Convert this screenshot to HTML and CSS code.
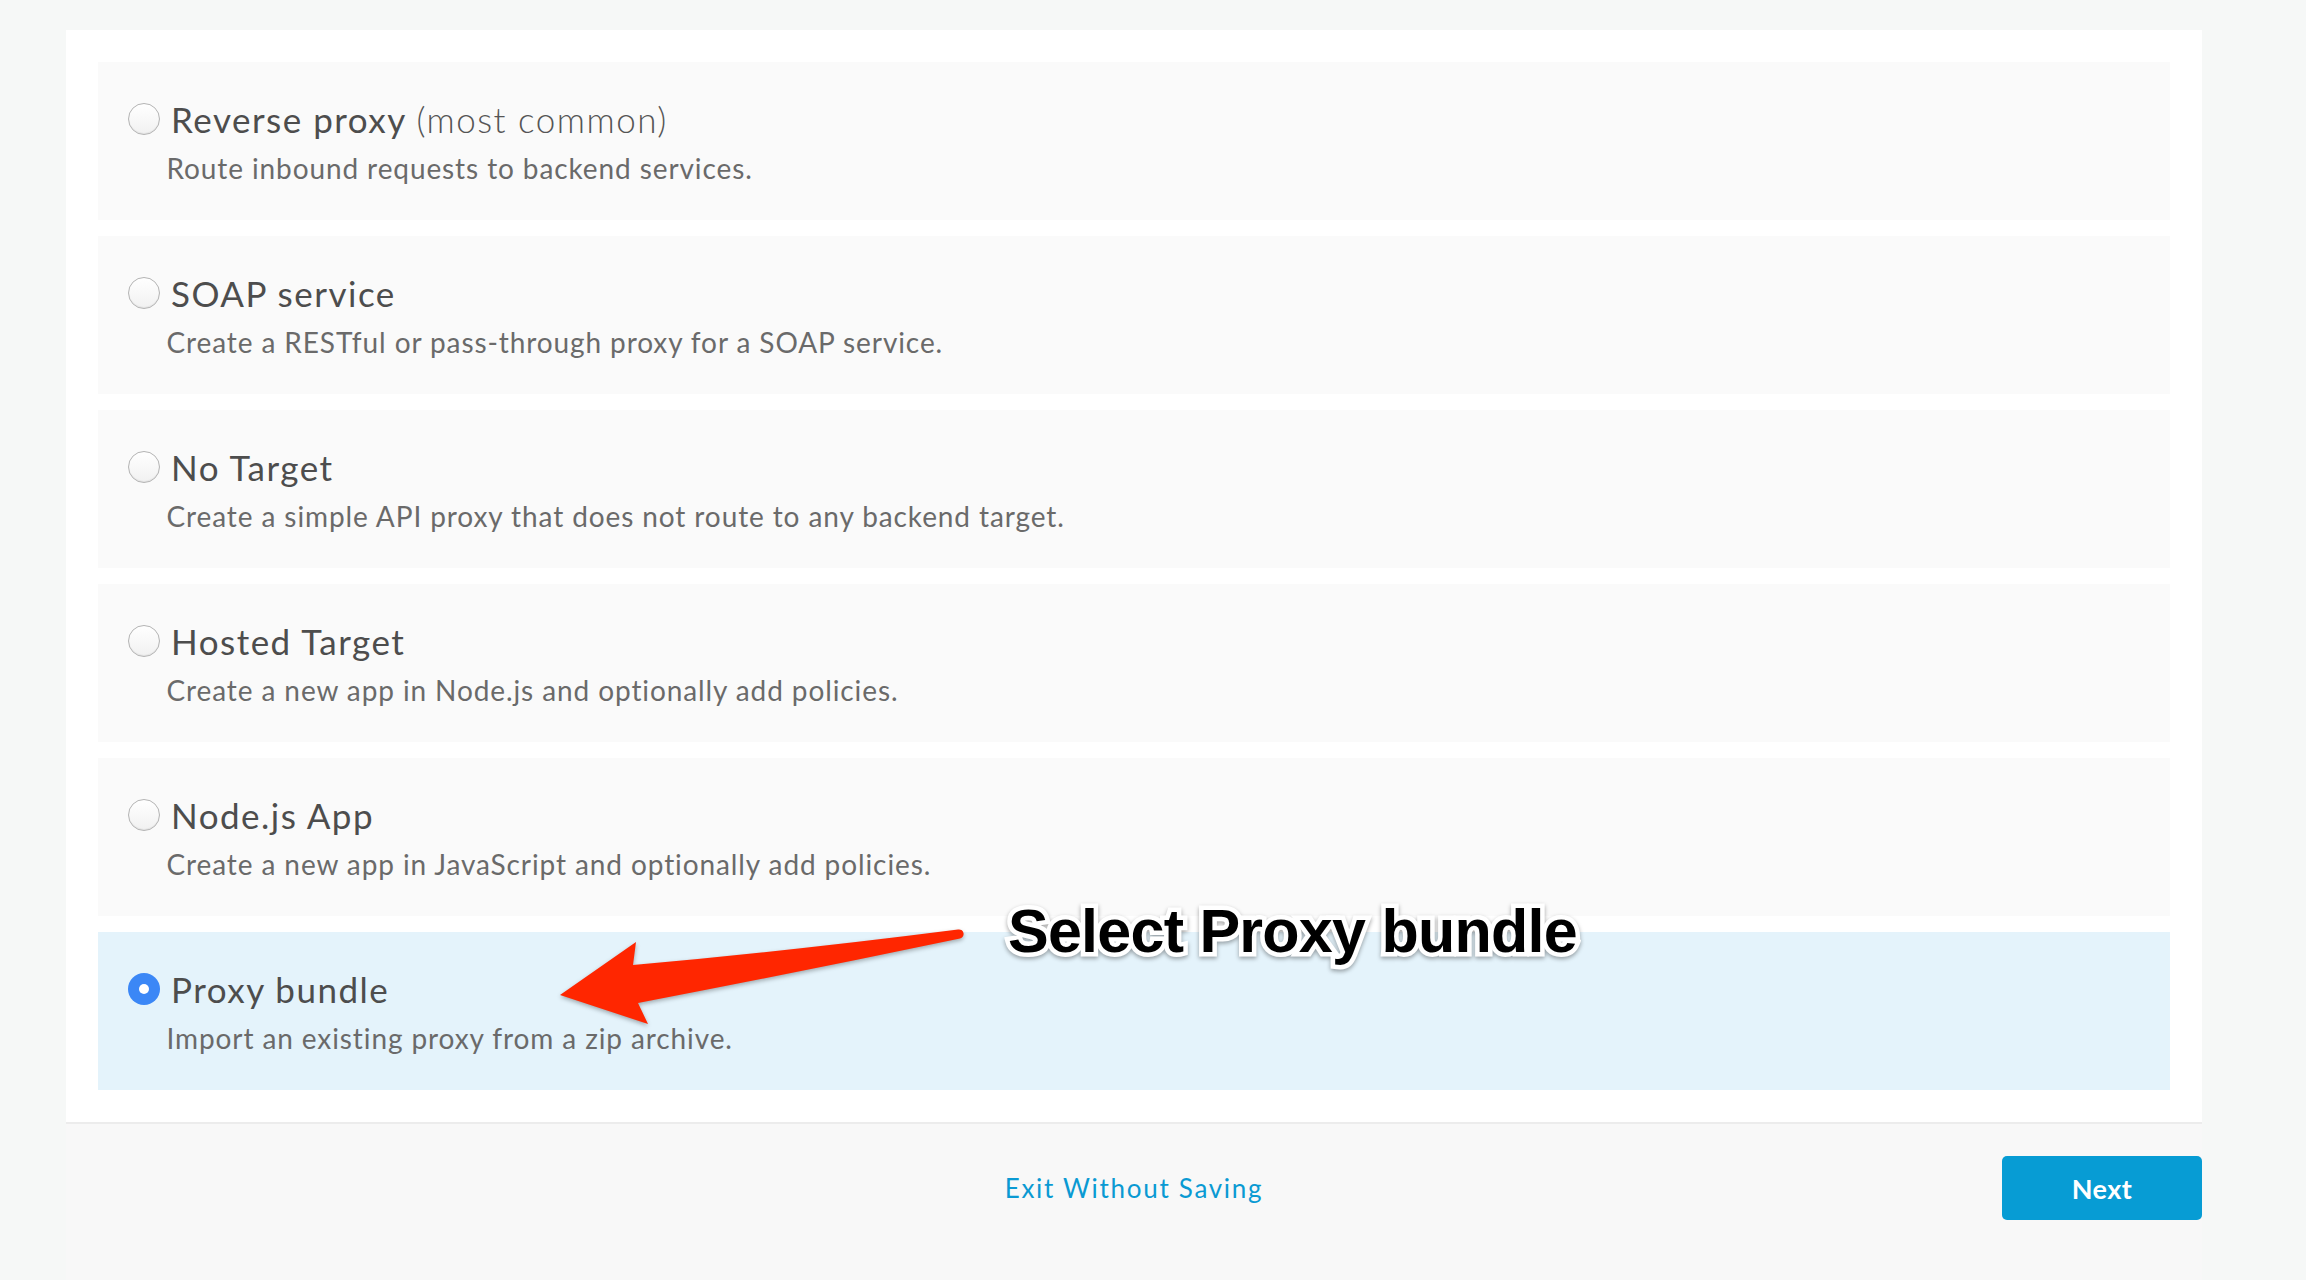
FILE: index.html
```html
<!DOCTYPE html>
<html lang="en">
<head>
<meta charset="utf-8">
<title>Build a Proxy</title>
<link rel="stylesheet" href="styles.css">
</head>
<body>
<main class="page">
  <section class="panel">
    <label class="option">
      <span class="option-head"><span class="radio"></span><span class="option-title">Reverse proxy <span class="option-note">(most common)</span></span></span>
      <span class="option-desc">Route inbound requests to backend services.</span>
    </label>
    <label class="option">
      <span class="option-head"><span class="radio"></span><span class="option-title">SOAP service</span></span>
      <span class="option-desc">Create a RESTful or pass-through proxy for a SOAP service.</span>
    </label>
    <label class="option">
      <span class="option-head"><span class="radio"></span><span class="option-title">No Target</span></span>
      <span class="option-desc">Create a simple API proxy that does not route to any backend target.</span>
    </label>
    <label class="option">
      <span class="option-head"><span class="radio"></span><span class="option-title">Hosted Target</span></span>
      <span class="option-desc">Create a new app in Node.js and optionally add policies.</span>
    </label>
    <label class="option">
      <span class="option-head"><span class="radio"></span><span class="option-title">Node.js App</span></span>
      <span class="option-desc">Create a new app in JavaScript and optionally add policies.</span>
    </label>
    <label class="option option-selected">
      <span class="option-head"><span class="radio radio-on"></span><span class="option-title">Proxy bundle</span></span>
      <span class="option-desc">Import an existing proxy from a zip archive.</span>
    </label>
  </section>
  <footer class="footer">
    <span class="footer-spacer"></span>
    <a class="exit-link" href="#">Exit Without Saving</a>
    <button class="next-btn" type="button">Next</button>
  </footer>
</main>

<div class="annotation">
  <svg class="arrow" width="2306" height="1280" viewBox="0 0 2306 1280">
    <path class="arrow-shape" d="M 958 929.5 Q 790 951 633 965 L 636 942 L 560 995 L 648 1024 L 638 1003 Q 800 972 960 938.5 A 4.5 4.5 0 0 0 958 929.5 Z"/>
  </svg>
  <div class="callout">Select Proxy bundle</div>
</div>
</body>
</html>
```

FILE: styles.css
```css
html, body {
  margin: 0;
  padding: 0;
}

body {
  background: #f6f8f7;
  font-family: Lato, "Open Sans", "Liberation Sans", sans-serif;
  width: 2306px;
  height: 1280px;
  overflow: hidden;
  position: relative;
}

.page {
  padding-top: 30px;
  margin-left: 66px;
  width: 2136px;
}

.panel {
  background: #ffffff;
  padding: 32px;
  display: flex;
  flex-direction: column;
  gap: 16px;
}

.option {
  display: flex;
  flex-direction: column;
  background: #fafafa;
  padding: 32px 30px 28px;
  cursor: pointer;
}

.option-selected {
  background: #e4f3fb;
}

.option-head {
  display: flex;
  align-items: center;
  gap: 11px;
  height: 50px;
}

.radio {
  width: 32px;
  height: 32px;
  box-sizing: border-box;
  border-radius: 50%;
  border: 1.5px solid #b4b4b4;
  background: linear-gradient(#ffffff, #f1f1f1);
  box-shadow: inset 0 -1px 1px rgba(0, 0, 0, 0.06);
  flex: none;
  display: flex;
  align-items: center;
  justify-content: center;
}

.radio-on {
  border: none;
  background: #3b87f6;
  box-shadow: none;
}

.radio-on::after {
  content: "";
  width: 10px;
  height: 10px;
  border-radius: 50%;
  background: #ffffff;
}

.option-title {
  font-size: 35px;
  line-height: 50px;
  color: #4d4d4d;
  letter-spacing: 1.5px;
}

.option-note {
  font-weight: 300;
  color: #555555;
}

.option-desc {
  margin-left: 38.5px;
  font-size: 28px;
  line-height: 48px;
  color: #6a6a6a;
  letter-spacing: 0.9px;
}

.footer {
  border-top: 2px solid #ececec;
  background: #f8f8f8;
  padding: 32px 0 60px;
  display: grid;
  grid-template-columns: 1fr auto 1fr;
  align-items: center;
}

.exit-link {
  font-size: 26px;
  color: #0a9ad3;
  text-decoration: none;
  letter-spacing: 1.7px;
}

.next-btn {
  justify-self: end;
  width: 200px;
  height: 64px;
  border: none;
  border-radius: 5px;
  background: #079cd4;
  color: #ffffff;
  font-family: Lato, "Open Sans", "Liberation Sans", sans-serif;
  font-weight: 700;
  font-size: 27px;
  letter-spacing: 0.5px;
}

.annotation {
  position: absolute;
  left: 0;
  top: 0;
  width: 2306px;
  height: 1280px;
  pointer-events: none;
}

.arrow {
  position: absolute;
  left: 0;
  top: 0;
  filter: drop-shadow(0 2px 2px rgba(0, 0, 0, 0.3));
}

.arrow-shape {
  fill: #ff2600;
}

.callout {
  position: absolute;
  left: 1008px;
  top: 901px;
  font-family: "Liberation Sans", Arial, sans-serif;
  font-weight: 700;
  font-size: 61px;
  line-height: 61px;
  letter-spacing: -0.75px;
  color: #000000;
  -webkit-text-stroke: 9px #ffffff;
  paint-order: stroke fill;
  filter: drop-shadow(0 2px 2px rgba(0, 0, 0, 0.35));
  white-space: nowrap;
}
```
